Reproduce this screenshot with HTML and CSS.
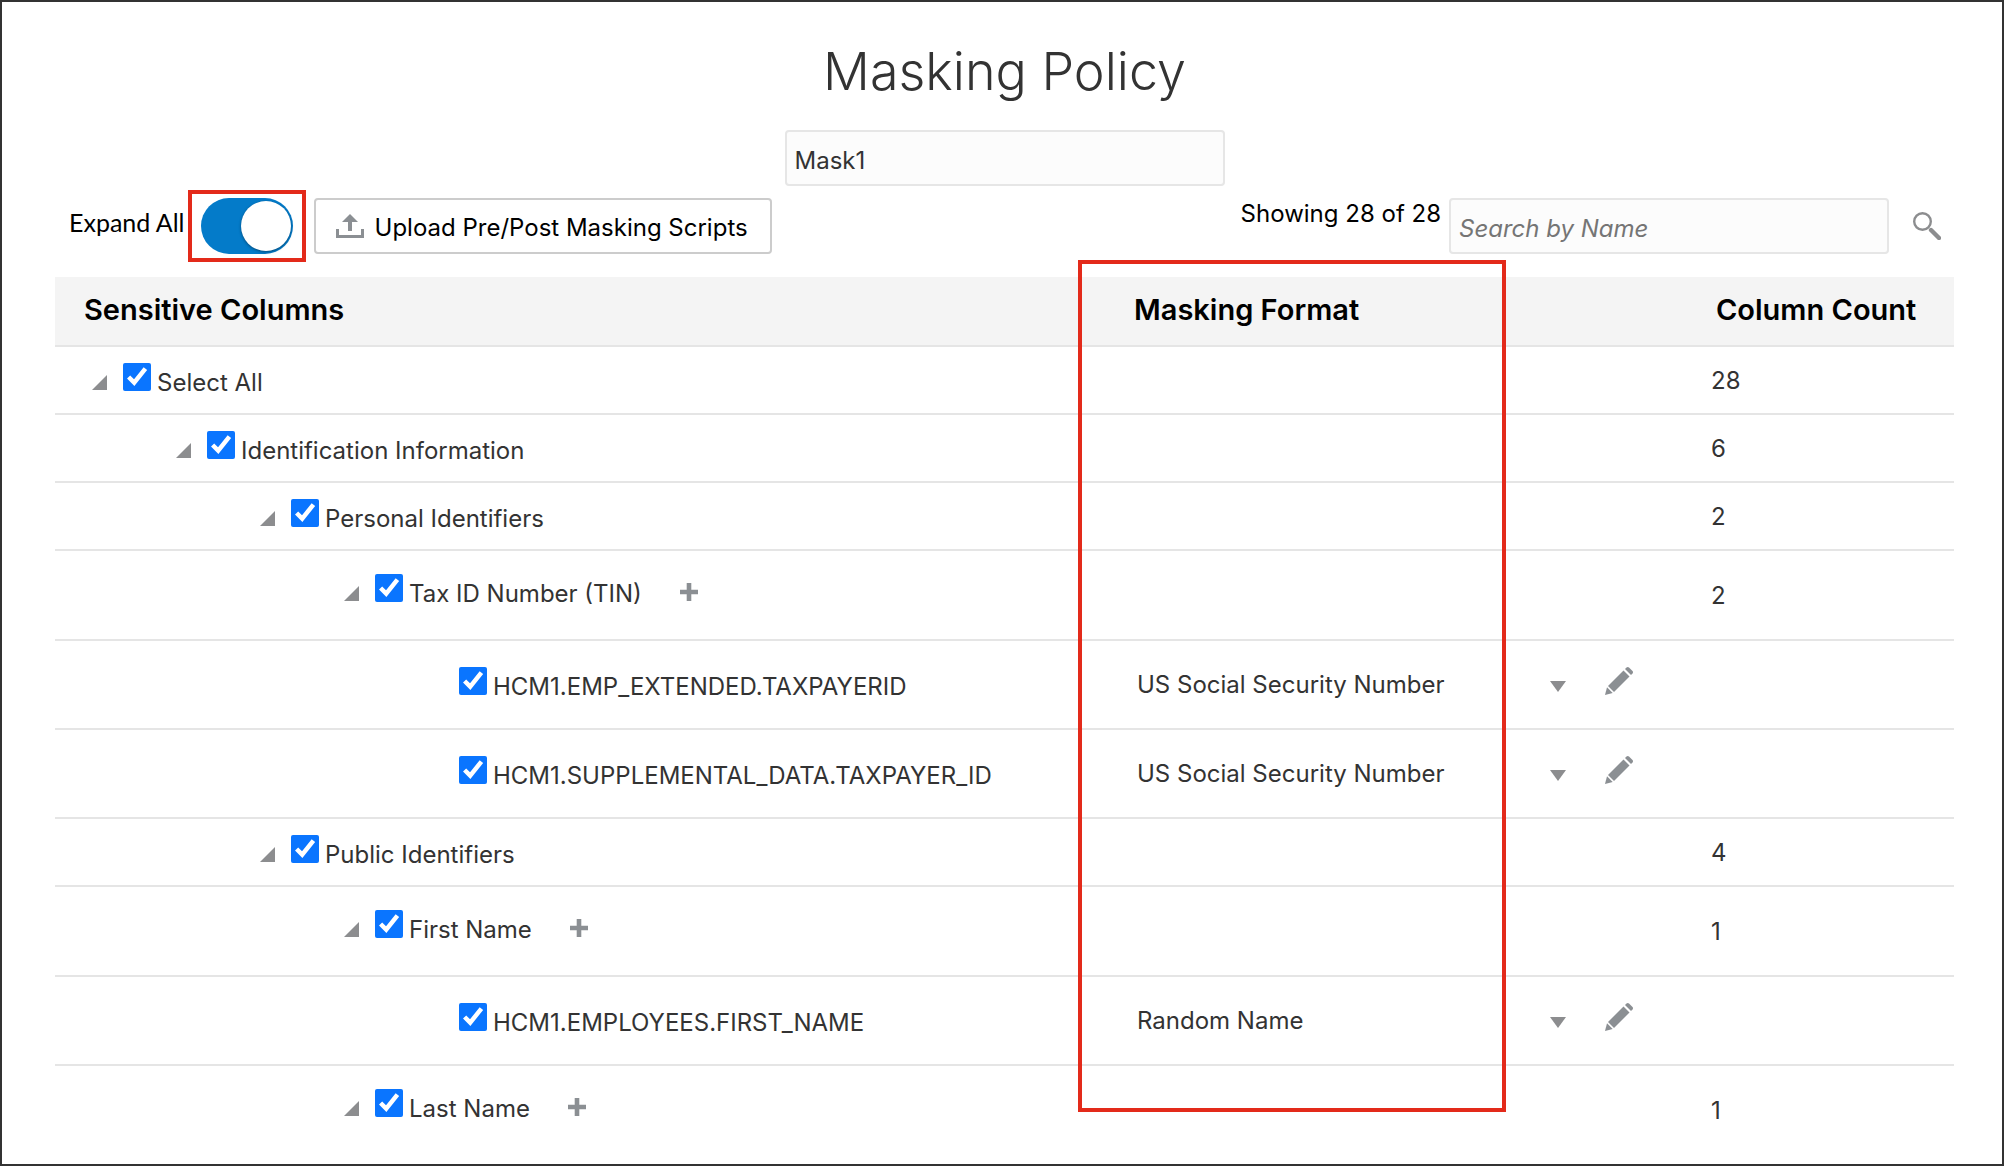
FILE: index.html
```html
<!DOCTYPE html>
<html lang="en">
<head>
<meta charset="utf-8">
<title>Masking Policy</title>
<link rel="stylesheet" href="styles.css">
</head>
<body>
<svg class="sprite" aria-hidden="true">
  <symbol id="icon-caret" viewBox="0 0 15 15"><path d="M15 0V15H0z" fill="#8c8d8f"/></symbol>
  <symbol id="icon-plus" viewBox="0 0 18 18"><path d="M6.700 0h4.600v6.700H18v4.600h-6.700V18H6.700v-6.700H0V6.700h6.700z" fill="#8b8f93"/></symbol>
  <symbol id="icon-down" viewBox="0 0 16 11"><path d="M0 0H16L8 11z" fill="#8c8d8f"/></symbol>
  <symbol id="icon-pencil" viewBox="0 0 28 28"><g fill="#8b8f93"><path d="M18.500 3.500l6 6L9 25 3 19z"/><path d="M20 2l1.500-1.500q1.200-1 2.500 0l3.500 3.500q1 1.200 0 2.500L26 8z"/><path d="M2 20.300l5.700 5.700L0 28z"/></g></symbol>
</svg>
<main class="page">
  <header class="heading">
    <h1 class="title">Masking Policy</h1>
    <input class="field field-name" type="text" value="Mask1" aria-label="Policy name">
  </header>
  <div class="toolbar">
    <label class="expand-label" for="expand">Expand All</label>
    <span class="toggle-wrap"><input class="toggle" id="expand" type="checkbox" role="switch" checked></span>
    <button class="upload" type="button">
      <svg class="upload-icon" viewBox="0 0 28 26" aria-hidden="true"><path d="M14 1l8 8h-6v9h-4V9H6zM0 16h3v6h22v-6h3v9H0z" fill="#8b8f93"/></svg>
      Upload Pre/Post Masking Scripts
    </button>
    <span class="showing">Showing 28 of 28</span>
    <input class="field field-search" type="text" placeholder="Search by Name" aria-label="Search by Name">
    <button class="search" type="button" aria-label="Search">
      <svg class="search-icon" viewBox="0 0 28 28" aria-hidden="true"><circle cx="9.500" cy="9.500" r="8.300" fill="none" stroke="#8c8d8f" stroke-width="2.400"/><path d="M18 18l8 8" stroke="#8c8d8f" stroke-width="4.400" stroke-linecap="round"/></svg>
    </button>
  </div>
  <div class="table-wrap">
    <table class="columns">
      <thead>
        <tr><th class="col-name" scope="col">Sensitive Columns</th><th class="col-format" scope="col">Masking Format</th><th class="col-count" scope="col">Column Count</th></tr>
      </thead>
      <tbody>
        <tr class="row-group">
          <td><div class="node level-0"><svg class="caret"><use href="#icon-caret"/></svg><input class="check" type="checkbox" id="c1" checked><label for="c1">Select All</label></div></td><td></td><td class="count">28</td>
        </tr>
        <tr class="row-group">
          <td><div class="node level-1"><svg class="caret"><use href="#icon-caret"/></svg><input class="check" type="checkbox" id="c2" checked><label for="c2">Identification Information</label></div></td><td></td><td class="count">6</td>
        </tr>
        <tr class="row-group">
          <td><div class="node level-2"><svg class="caret"><use href="#icon-caret"/></svg><input class="check" type="checkbox" id="c3" checked><label for="c3">Personal Identifiers</label></div></td><td></td><td class="count">2</td>
        </tr>
        <tr class="row-type">
          <td><div class="node level-3"><svg class="caret"><use href="#icon-caret"/></svg><input class="check" type="checkbox" id="c4" checked><label for="c4">Tax ID Number (TIN)</label><button class="add" type="button" aria-label="Add column"><svg class="plus"><use href="#icon-plus"/></svg></button></div></td><td></td><td class="count">2</td>
        </tr>
        <tr class="row-leaf">
          <td><div class="node level-4"><input class="check" type="checkbox" id="c5" checked><label for="c5">HCM1.EMP_EXTENDED.TAXPAYERID</label></div></td>
          <td><div class="format"><select class="select" aria-label="Masking format"><option>US Social Security Number</option></select><svg class="down"><use href="#icon-down"/></svg><button class="edit" type="button" aria-label="Edit"><svg class="pencil"><use href="#icon-pencil"/></svg></button></div></td><td></td>
        </tr>
        <tr class="row-leaf">
          <td><div class="node level-4"><input class="check" type="checkbox" id="c6" checked><label for="c6">HCM1.SUPPLEMENTAL_DATA.TAXPAYER_ID</label></div></td>
          <td><div class="format"><select class="select" aria-label="Masking format"><option>US Social Security Number</option></select><svg class="down"><use href="#icon-down"/></svg><button class="edit" type="button" aria-label="Edit"><svg class="pencil"><use href="#icon-pencil"/></svg></button></div></td><td></td>
        </tr>
        <tr class="row-group">
          <td><div class="node level-2"><svg class="caret"><use href="#icon-caret"/></svg><input class="check" type="checkbox" id="c7" checked><label for="c7">Public Identifiers</label></div></td><td></td><td class="count">4</td>
        </tr>
        <tr class="row-type">
          <td><div class="node level-3"><svg class="caret"><use href="#icon-caret"/></svg><input class="check" type="checkbox" id="c8" checked><label for="c8">First Name</label><button class="add" type="button" aria-label="Add column"><svg class="plus"><use href="#icon-plus"/></svg></button></div></td><td></td><td class="count">1</td>
        </tr>
        <tr class="row-leaf">
          <td><div class="node level-4"><input class="check" type="checkbox" id="c9" checked><label for="c9">HCM1.EMPLOYEES.FIRST_NAME</label></div></td>
          <td><div class="format"><select class="select" aria-label="Masking format"><option>Random Name</option></select><svg class="down"><use href="#icon-down"/></svg><button class="edit" type="button" aria-label="Edit"><svg class="pencil"><use href="#icon-pencil"/></svg></button></div></td><td></td>
        </tr>
        <tr class="row-type">
          <td><div class="node level-3"><svg class="caret"><use href="#icon-caret"/></svg><input class="check" type="checkbox" id="c10" checked><label for="c10">Last Name</label><button class="add" type="button" aria-label="Add column"><svg class="plus"><use href="#icon-plus"/></svg></button></div></td><td></td><td class="count">1</td>
        </tr>
      </tbody>
    </table>
    <div class="callout"></div>
  </div>
</main>
</body>
</html>
```
FILE: styles.css
```css
* { box-sizing: border-box; }

body {
  margin: 0;
  background: #fff;
  color: #333;
  font: 24px/32px Inter, "Liberation Sans", sans-serif;
}

.sprite { display: none; }

.page {
  min-height: 100vh;
  padding: 0 48px 0 53px;
  border: 2px solid #333;
}

button, input, select { font: inherit; color: inherit; margin: 0; }
button { padding: 0; border: 0; background: none; }
svg { display: block; flex: none; }

.heading {
  display: flex;
  flex-direction: column;
  align-items: center;
  padding-top: 34px;
}

.title {
  margin: 0 0 22px;
  font-size: 52px;
  line-height: 72px;
  font-weight: 300;
}

.field {
  width: 440px;
  height: 56px;
  padding: 4px 8px 0;
  border: 2px solid #e6e6e6;
  border-radius: 4px;
  background: #fcfcfc;
}

.field-search::placeholder { color: #757575; font-style: italic; opacity: 1; }

.toolbar {
  display: flex;
  align-items: center;
  margin-top: 12px;
  padding-left: 14px;
  color: #000;
}

.expand-label { margin-bottom: 8px; font-family: Lato, sans-serif; font-size: 25px; }

.toggle-wrap { position: relative; margin-left: 16px; }

.toggle-wrap::after {
  content: "";
  position: absolute;
  inset: -8px -13px;
  border: 4px solid #e32a1a;
  pointer-events: none;
}

.toggle {
  display: flex;
  align-items: center;
  justify-content: flex-end;
  appearance: none;
  width: 92px;
  height: 56px;
  padding-right: 2px;
  border-radius: 28px;
  background: #047bc9;
}

.toggle::before {
  content: "";
  width: 50px;
  height: 50px;
  border-radius: 50%;
  background: #fff;
  box-shadow: 0 1px 3px #0006;
}

.upload {
  display: flex;
  align-items: center;
  gap: 11px;
  height: 56px;
  margin-left: 21px;
  padding: 4px 22px 0 20px;
  border: 2px solid #ccc;
  border-radius: 4px;
  font-weight: 400;
  white-space: nowrap;
}

.upload-icon { width: 28px; height: 26px; margin-bottom: 4px; }
.showing { margin: 0 8px 24px auto; white-space: nowrap; }
.field-search { color: #333; }
.search { margin-left: 24px; margin-right: 13px; }
.search-icon { width: 28px; height: 28px; }

.table-wrap {
  position: relative;
  margin: 23px 0 0;
}

.columns {
  width: 100%;
  border-collapse: separate;
  border-spacing: 0;
  table-layout: fixed;
}

th {
  height: 70px;
  padding: 0 0 2px;
  background: #f4f4f4;
  border-bottom: 2px solid #e5e5e5;
  color: #000;
  font-size: 29px;
  font-weight: 600;
  text-align: left;
}

.col-name { padding-left: 29px; }
.col-format { width: 577px; }
.col-count { width: 243px; padding-left: 5px; }

td {
  padding: 0;
  border-bottom: 2px solid #e5e5e5;
  vertical-align: top;
}

tr:last-child td { border-bottom: 0; }

.row-group td { height: 68px; padding-top: 16px; }
.row-type td { height: 90px; padding-top: 23px; }
.row-leaf td { height: 89px; padding-top: 26px; }
.row-group .count { padding-top: 18px; }
.row-type .count { padding-top: 29px; }

.node { display: flex; align-items: flex-start; }
.node label { margin: 4px 0 0 6px; white-space: nowrap; }
.level-0 { padding-left: 37px; }
.level-1 { padding-left: 121px; }
.level-2 { padding-left: 205px; }
.level-3 { padding-left: 289px; }
.level-4 { padding-left: 404px; }

.caret { width: 15px; height: 15px; margin: 12px 16px 0 0; }
.check { width: 28px; height: 28px; accent-color: #0a75ff; }
.add { margin: 9px 0 0 38px; }
.plus { width: 18px; height: 18px; }

.format { display: flex; align-items: flex-start; padding-left: 3px; }

.select {
  appearance: none;
  width: 413px;
  height: 32px;
  margin-top: 2px;
  padding: 0;
  border: 0;
  background: none;
}

.down { width: 16px; height: 11px; margin: 14px 39px 0 0; }
.pencil { width: 28px; height: 28px; }

.callout {
  position: absolute;
  top: -17px;
  bottom: 44px;
  right: 448px;
  width: 428px;
  border: 4px solid #e32a1a;
  pointer-events: none;
}
```
